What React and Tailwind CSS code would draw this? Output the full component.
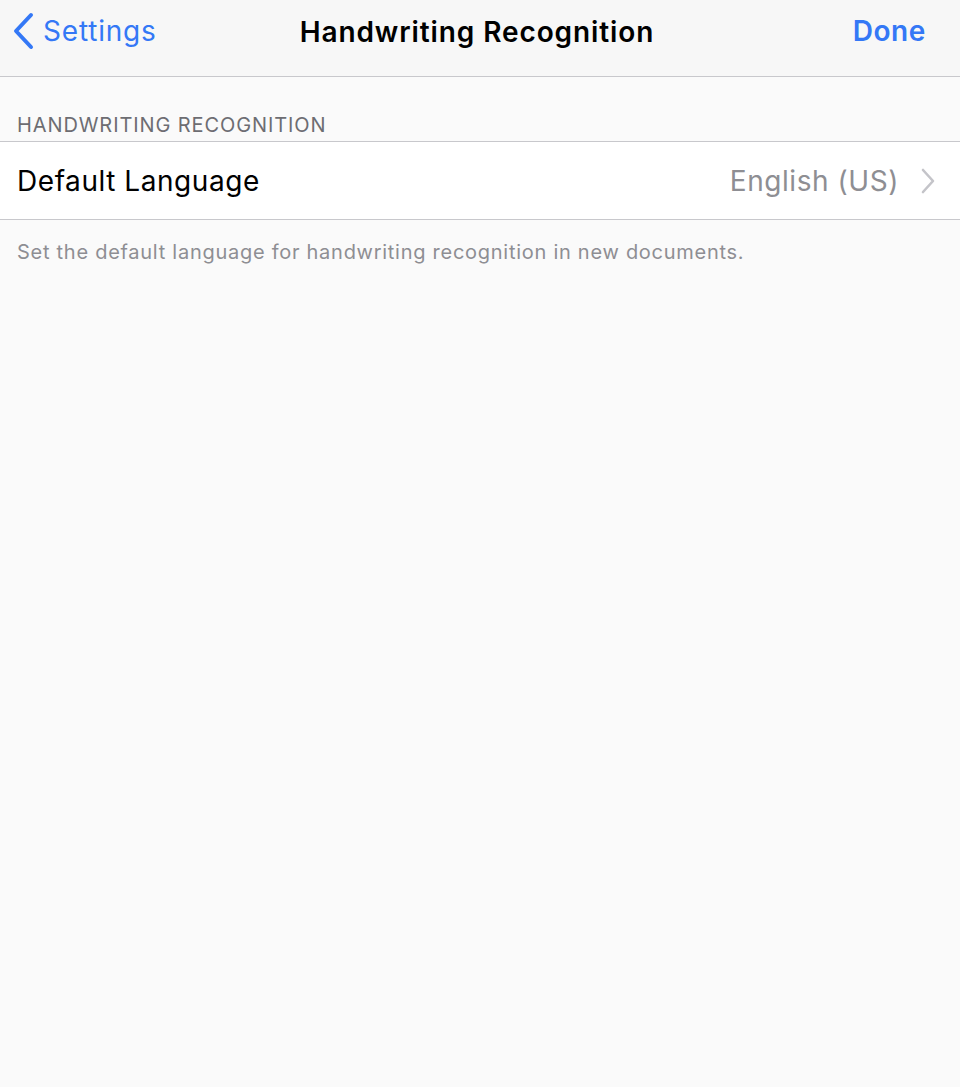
/** Settings detail screen for handwriting recognition. */
export default function App() {
  return (
    <div className="min-h-[1087px] w-[960px] bg-[#fafafa] font-['Inter',sans-serif] antialiased">
      {/* ── Navigation bar ─────────────────────────────── */}
      <header className="relative flex h-[77px] items-center justify-between border-b border-[#c8c8cc] bg-[#f7f7f7] px-[12px] pb-[14px]">
        <button className="flex items-center gap-[8px] text-[#3478f6]">
          <svg width="23" height="38" viewBox="0 0 23 38" aria-hidden="true">
            <path d="M19 3 L4 19 L19 35" fill="none" stroke="currentColor" strokeWidth="4" strokeLinecap="round" strokeLinejoin="round" />
          </svg>
          <span className="text-[28px] tracking-[0.8px]">Settings</span>
        </button>

        <h1 className="absolute left-[calc(50%-3px)] top-[11px] -translate-x-1/2 text-[28px] font-semibold tracking-[0.9px] text-black">
          Handwriting Recognition
        </h1>

        <button className="pr-[22px] text-[28px] font-semibold tracking-[0.6px] text-[#3478f6]">Done</button>
      </header>

      {/* ── Section ────────────────────────────────────── */}
      <p className="px-[17px] pt-[37px] pb-[4px] text-[20px] uppercase leading-[23px] tracking-[0.9px] text-[#6d6d72]">
        Handwriting Recognition
      </p>

      <div className="flex h-[79px] items-center justify-between border-y border-[#c8c8cc] bg-white pl-[17px] pr-[25px]">
        <span className="text-[28px] tracking-[0.55px] text-black">Default Language</span>
        <span className="flex items-center gap-[22px] text-[28px] tracking-[0.55px] text-[#8e8e93]">
          English (US)
          <svg width="14" height="26" viewBox="0 0 14 26" aria-hidden="true">
            <path d="M2 2 L12 13 L2 24" fill="none" stroke="#c4c4c9" strokeWidth="2.6" strokeLinecap="round" strokeLinejoin="round" />
          </svg>
        </span>
      </div>

      <p className="px-[17px] pt-[18px] text-[20px] leading-[28px] tracking-[0.73px] text-[#8e8e93]">
        Set the default language for handwriting recognition in new documents.
      </p>
    </div>
  );
}
